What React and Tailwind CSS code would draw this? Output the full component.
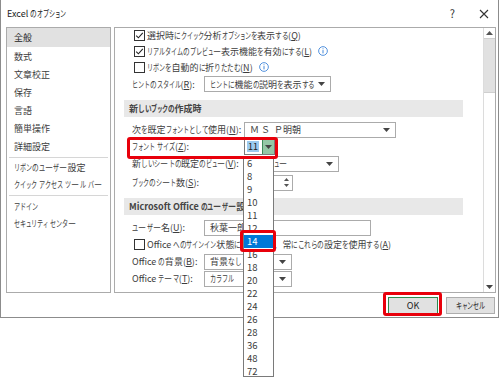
import React from "react";

const KATA_SMALL = "ぁぃぅぇぉっゃゅょァィゥェォッャュョ";

const T = ({ t }) => (
  <span>
    {[...t].map((c, i) => {
      if (c === "ー") {
        return (
          <span key={i} className="inline-block w-[8.5px] overflow-visible">
            <span className="inline-block origin-left scale-x-[0.9]">{c}</span>
          </span>
        );
      }
      if (KATA_SMALL.includes(c)) {
        return (
          <span key={i} className="inline-block w-[5px] overflow-visible">
            <span className="inline-block origin-left scale-x-[0.62]">{c}</span>
          </span>
        );
      }
      if (/[\u3041-\u309f]/.test(c)) {
        return (
          <span key={i} className="inline-block w-[6.5px] overflow-visible">
            <span className="inline-block origin-left scale-x-[0.74]">{c}</span>
          </span>
        );
      }
      if (/[\u30a0-\u30ff]/.test(c)) {
        return (
          <span key={i} className="inline-block w-[6px] overflow-visible">
            <span className="inline-block origin-left scale-x-[0.68]">{c}</span>
          </span>
        );
      }
      return <React.Fragment key={i}>{c}</React.Fragment>;
    })}
  </span>
);

const Tri = () => (
  <svg width="7" height="4" viewBox="0 0 7 4" className="shrink-0">
    <path d="M0 0 L7 0 L3.5 4 Z" fill="#444" />
  </svg>
);

const Info = () => (
  <svg width="10" height="10" viewBox="0 0 11 11" className="ml-[4px] shrink-0">
    <circle cx="5.5" cy="5.5" r="4.8" fill="none" stroke="#2f7bd6" strokeWidth="0.9" />
    <rect x="5" y="4.5" width="1" height="3.6" fill="#2f7bd6" />
    <rect x="5" y="2.6" width="1" height="1" fill="#2f7bd6" />
  </svg>
);

const Check = ({ checked }) => (
  <div className="w-[11px] h-[11px] border border-[#333] bg-white flex items-center justify-center shrink-0">
    {checked && (
      <svg width="9" height="9" viewBox="0 0 9 9">
        <path d="M1.2 4.6 L3.4 6.8 L7.8 1.8" fill="none" stroke="#222" strokeWidth="1.1" />
      </svg>
    )}
  </div>
);

const Select = ({ w, text }) => (
  <div
    className="h-[16px] border border-[#ababab] bg-white flex items-center justify-between pl-[5px] pr-[5px] shrink-0"
    style={{ width: w }}
  >
    <span className="leading-none whitespace-nowrap overflow-hidden">
      <T t={text} />
    </span>
    <Tri />
  </div>
);

const U = ({ c }) => <span className="underline">{c}</span>;

const Label = ({ w, t, k }) => (
  <span className="shrink-0 whitespace-nowrap" style={{ width: w }}>
    <T t={t} />(<U c={k} />):
  </span>
);

const navItems = ["全般", "数式", "文章校正", "保存", "言語", "簡単操作", "詳細設定"];

export default function App() {
  return (
    <div className="relative w-[500px] h-[377px] bg-white overflow-hidden font-['Noto_Sans_CJK_JP',sans-serif] text-[9px] text-[#3c3c3c]">
      {/* dialog */}
      <div className="w-[499px] h-[318px] border-x border-b border-[#8c8c8c] bg-white flex flex-col">
        {/* title */}
        <div className="h-[27px] flex items-center pl-[6px] pr-[9px] shrink-0">
          <span className="text-[#222] leading-none whitespace-nowrap">
            <T t="Excel のオプション" />
          </span>
          <span className="ml-auto text-[11px] text-[#333] leading-none mr-[24px]">?</span>
          <svg width="10" height="10" viewBox="0 0 10 10">
            <path d="M1 1 L9 9 M9 1 L1 9" stroke="#333" strokeWidth="1.1" />
          </svg>
        </div>

        {/* body */}
        <div className="flex gap-[3px] pl-[5px] pr-[2px] h-[266px] shrink-0">
          {/* nav */}
          <div className="w-[105px] h-full border border-[#ababab] flex flex-col">
            {navItems.map((t, i) => (
              <div
                key={t}
                className={`${i === 0 ? "h-[19px] bg-[#e1e1e1] text-[#222]" : "h-[18px]"} flex items-center pl-[7px] leading-none whitespace-nowrap`}
              >
                {t}
              </div>
            ))}
            <div className="mx-[2px] mt-[2px] mb-[1px] h-px bg-[#d6d6d6]" />
            <div className="h-[17px] flex items-center pl-[7px] leading-none whitespace-nowrap"><T t="リボンのユーザー設定" /></div>
            <div className="h-[17px] flex items-center pl-[7px] leading-none whitespace-nowrap"><T t="クイック アクセス ツール バー" /></div>
            <div className="mx-[2px] mt-[2px] mb-[2px] h-px bg-[#d6d6d6]" />
            <div className="h-[17px] flex items-center pl-[7px] leading-none whitespace-nowrap"><T t="アドイン" /></div>
            <div className="h-[17px] flex items-center pl-[7px] leading-none whitespace-nowrap"><T t="セキュリティ センター" /></div>
          </div>

          {/* content */}
          <div className="flex-1 h-full border border-[#ababab] flex">
            <div className="flex-1 flex flex-col pl-[9px] pr-[9px] overflow-hidden">
              <div className="h-[15px] flex items-center pl-[10px] gap-[2px] whitespace-nowrap leading-none">
                <Check checked />
                <span><T t="選択時にクイック分析オプションを表示する" />(<U c="Q" />)</span>
              </div>
              <div className="h-[16px] flex items-center pl-[10px] gap-[2px] whitespace-nowrap leading-none">
                <Check checked />
                <span><T t="リアルタイムのプレビュー表示機能を有効にする" />(<U c="L" />)</span>
                <Info />
              </div>
              <div className="h-[16px] flex items-center pl-[10px] gap-[2px] whitespace-nowrap leading-none">
                <Check />
                <span><T t="リボンを自動的に折りたたむ" />(<U c="N" />)</span>
                <Info />
              </div>
              <div className="h-[18px] flex items-center pl-[8px] whitespace-nowrap leading-none">
                <Label w={72} t="ヒントのスタイル" k="R" />
                <Select w={127} text="ヒントに機能の説明を表示する" />
              </div>
              <div className="mt-[7px] mr-[11px] h-[17px] bg-[#e8e8e8] flex items-center pl-[5px] font-bold text-[#444] leading-none whitespace-nowrap">
                <T t="新しいブックの作成時" />
              </div>
              <div className="mt-[4px] h-[17px] flex items-center pl-[8px] whitespace-nowrap leading-none">
                <Label w={112} t="次を既定フォントとして使用" k="N" />
                <div className="h-[16px] w-[152px] border border-[#ababab] bg-white flex items-center justify-between pl-[5px] pr-[5px] shrink-0">
                  <span className="leading-none whitespace-pre">Ｍ Ｓ  Ｐ明朝</span>
                  <Tri />
                </div>
              </div>
              <div className="h-[17px] flex items-center pl-[8px] whitespace-nowrap leading-none">
                <Label w={112} t="フォント サイズ" k="Z" />
                <div className="h-[16px] w-[31px] border border-[#7a7a7a] bg-white flex">
                  <div className="flex-1 flex items-center pl-[2px]">
                    <span className="bg-[#9ccaf0] text-[#222] px-[1px] leading-[11px]">11</span>
                  </div>
                  <div className="w-[12px] bg-[#94c7a6] border-l border-[#3d8a58] flex items-center justify-center">
                    <Tri />
                  </div>
                </div>
              </div>
              <div className="h-[17px] flex items-center pl-[8px] whitespace-nowrap leading-none">
                <Label w={112} t="新しいシートの既定のビュー" k="V" />
                <Select w={95} text="標準ビュー" />
              </div>
              <div className="mt-[2px] h-[17px] flex items-center pl-[8px] whitespace-nowrap leading-none">
                <Label w={112} t="ブックのシート数" k="S" />
                <div className="h-[16px] w-[49px] border border-[#ababab] bg-white flex items-center justify-between pl-[5px] pr-[3px]">
                  <span>1</span>
                  <div className="flex flex-col gap-[3px]">
                    <svg width="5" height="3" viewBox="0 0 5 3"><path d="M0 3 L5 3 L2.5 0 Z" fill="#555" /></svg>
                    <svg width="5" height="3" viewBox="0 0 5 3"><path d="M0 0 L5 0 L2.5 3 Z" fill="#555" /></svg>
                  </div>
                </div>
              </div>
              <div className="mt-[7px] mr-[11px] h-[17px] bg-[#e8e8e8] flex items-center pl-[5px] font-bold text-[#444] leading-none whitespace-nowrap">
                <T t="Microsoft Office のユーザー設定" />
              </div>
              <div className="mt-[4px] h-[17px] flex items-center pl-[8px] whitespace-nowrap leading-none">
                <Label w={72} t="ユーザー名" k="U" />
                <div className="h-[16px] w-[167px] border border-[#ababab] bg-white flex items-center pl-[5px]">秋葉一郎</div>
              </div>
              <div className="h-[17px] flex items-center pl-[10px] gap-[2px] whitespace-nowrap leading-none">
                <Check />
                <span><T t="Office へのサインイン状態にかかわらず、常にこれらの設定を使用する" />(<U c="A" />)</span>
              </div>
              <div className="h-[17px] flex items-center pl-[8px] whitespace-nowrap leading-none">
                <Label w={72} t="Office の背景" k="B" />
                <Select w={88} text="背景なし" />
              </div>
              <div className="h-[17px] flex items-center pl-[8px] whitespace-nowrap leading-none">
                <Label w={72} t="Office テーマ" k="T" />
                <Select w={88} text="カラフル" />
              </div>
            </div>
            {/* scrollbar */}
            <div className="w-[12px] border-l border-[#dcdcdc] flex flex-col">
              <div className="h-[10px] flex items-center justify-center">
                <svg width="7" height="4" viewBox="0 0 7 4"><path d="M0 4 L7 4 L3.5 0 Z" fill="#555" /></svg>
              </div>
              <div className="h-[55px] bg-[#e1e1e1] border-y border-[#cfcfcf]" />
              <div className="flex-1" />
              <div className="h-[10px] flex items-center justify-center">
                <Tri />
              </div>
            </div>
          </div>
        </div>

        {/* footer */}
        <div className="flex-1 flex items-center justify-end gap-[8px] pr-[3px]">
          <div className="w-[50px] h-[17px] border border-[#2f8a4f] bg-[#e1e1e1] flex items-center justify-center text-[#222] leading-none whitespace-nowrap">
            OK
          </div>
          <div className="w-[49px] h-[17px] border border-[#adadad] bg-[#e1e1e1] flex items-center justify-center text-[#222] leading-none whitespace-nowrap">
            <T t="キャンセル" />
          </div>
        </div>
      </div>

      {/* dropdown list */}
      <div className="absolute left-[243px] top-[156px] w-[31px] h-[221px] border border-[#7a7a7a] bg-white flex flex-col">
        {["6", "8", "9", "10", "11", "12", "14", "16", "18", "20", "22", "24", "26", "28", "36", "48", "72"].map((n) => (
          <div
            key={n}
            className={`h-[13px] shrink-0 flex items-center pl-[3px] leading-none text-[9.5px] ${n === "14" ? "bg-[#0078d7] text-white" : ""}`}
          >
            {n}
          </div>
        ))}
      </div>

      {/* red annotation boxes */}
      <div className="absolute left-[127px] top-[137px] w-[151px] h-[22px] border-[3px] border-[#e8000b] rounded-[3px]" />
      <div className="absolute left-[240px] top-[230px] w-[36px] h-[22px] border-[3px] border-[#e8000b] rounded-[3px]" />
      <div className="absolute left-[383px] top-[292px] w-[59px] h-[24px] border-[3px] border-[#e8000b] rounded-[3px]" />
    </div>
  );
}
